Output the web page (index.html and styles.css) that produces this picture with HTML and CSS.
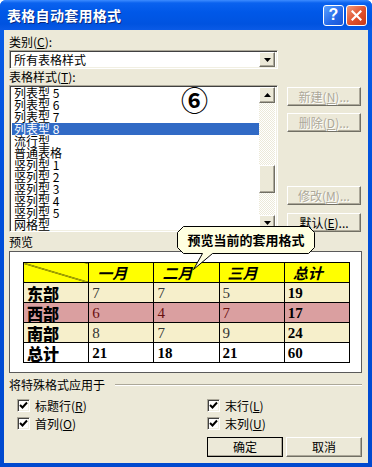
FILE: index.html
```html
<!DOCTYPE html>
<html lang="zh-CN">
<head>
    <meta charset="UTF-8">
    <title>表格自动套用格式</title>
    <link rel="stylesheet" href="styles.css">
</head>
<body>
    <div class="dialog">
        <div class="titlebar">
            <span class="title">表格自动套用格式</span>
            <div class="caption-buttons">
                <span class="cap-btn help">?</span>
                <span class="cap-btn close">
                    <svg width="11" height="11" viewBox="0 0 11 11"><path d="M1.5 1.5 L9.5 9.5 M9.5 1.5 L1.5 9.5" stroke="#fff" stroke-width="2.2" stroke-linecap="square"/></svg>
                </span>
            </div>
        </div>

        <div class="content">
            <div class="label">类别(<u>C</u>):</div>
            <div class="combo sunken">
                <span class="combo-text">所有表格样式</span>
                <span class="drop-btn raised">
                    <svg width="7" height="4" viewBox="0 0 7 4"><polygon points="0,0 7,0 3.5,4" fill="#000"/></svg>
                </span>
            </div>

            <div class="label">表格样式(<u>T</u>):</div>
            <div class="style-row">
                <div class="listbox sunken">
                    <ul class="items">
                        <li>列表型 5</li>
                        <li>列表型 6</li>
                        <li>列表型 7</li>
                        <li class="selected">列表型 8</li>
                        <li>流行型</li>
                        <li>普通表格</li>
                        <li>竖列型 1</li>
                        <li>竖列型 2</li>
                        <li>竖列型 3</li>
                        <li>竖列型 4</li>
                        <li>竖列型 5</li>
                        <li>网格型</li>
                    </ul>
                    <div class="scrollbar">
                        <span class="sb-btn raised">
                            <svg width="7" height="4" viewBox="0 0 7 4"><polygon points="3.5,0 7,4 0,4" fill="#000"/></svg>
                        </span>
                        <div class="sb-track">
                            <span class="sb-thumb raised"></span>
                        </div>
                        <span class="sb-btn raised">
                            <svg width="7" height="4" viewBox="0 0 7 4"><polygon points="0,0 7,0 3.5,4" fill="#000"/></svg>
                        </span>
                    </div>
                </div>
                <span class="marker">⑥</span>
                <div class="side-buttons">
                    <span class="btn raised disabled"><span>新建(<u>N</u>)...</span></span>
                    <span class="btn raised disabled"><span>删除(<u>D</u>)...</span></span>
                    <span class="btn raised disabled push-down"><span>修改(<u>M</u>)...</span></span>
                    <span class="btn raised"><span>默认(<u>E</u>)...</span></span>
                </div>
            </div>

            <div class="label label-preview">预览</div>
            <div class="preview">
                <table class="sample">
                    <tr class="head">
                        <td class="corner"></td>
                        <td>一月</td>
                        <td>二月</td>
                        <td>三月</td>
                        <td>总计</td>
                    </tr>
                    <tr class="light">
                        <th>东部</th>
                        <td>7</td>
                        <td>7</td>
                        <td>5</td>
                        <td class="sum">19</td>
                    </tr>
                    <tr class="red">
                        <th>西部</th>
                        <td>6</td>
                        <td>4</td>
                        <td>7</td>
                        <td class="sum">17</td>
                    </tr>
                    <tr class="light">
                        <th>南部</th>
                        <td>8</td>
                        <td>7</td>
                        <td>9</td>
                        <td class="sum">24</td>
                    </tr>
                    <tr class="total">
                        <th>总计</th>
                        <td>21</td>
                        <td>18</td>
                        <td>21</td>
                        <td>60</td>
                    </tr>
                </table>
            </div>

            <div class="group-head">
                <span>将特殊格式应用于</span>
                <span class="rule"></span>
            </div>
            <div class="checks">
                <label class="check"><span class="box"><svg width="9" height="9" viewBox="0 0 9 9"><path d="M1 4 L3.5 6.5 L8 1.5" fill="none" stroke="#000" stroke-width="2"/></svg></span><span>标题行(<u>R</u>)</span></label>
                <label class="check"><span class="box"><svg width="9" height="9" viewBox="0 0 9 9"><path d="M1 4 L3.5 6.5 L8 1.5" fill="none" stroke="#000" stroke-width="2"/></svg></span><span>末行(<u>L</u>)</span></label>
                <label class="check"><span class="box"><svg width="9" height="9" viewBox="0 0 9 9"><path d="M1 4 L3.5 6.5 L8 1.5" fill="none" stroke="#000" stroke-width="2"/></svg></span><span>首列(<u>O</u>)</span></label>
                <label class="check"><span class="box"><svg width="9" height="9" viewBox="0 0 9 9"><path d="M1 4 L3.5 6.5 L8 1.5" fill="none" stroke="#000" stroke-width="2"/></svg></span><span>末列(<u>U</u>)</span></label>
            </div>

            <div class="actions">
                <span class="btn raised default">确定</span>
                <span class="btn raised">取消</span>
            </div>
        </div>

        <div class="callout">
            <svg width="140" height="48" viewBox="0 0 140 48">
                <polygon points="7.5,2.5 132.5,2.5 138.5,8.5 138.5,23.5 132.5,29.5 36.5,29.5 17.5,45.5 26.5,29.5 7.5,29.5 1.5,23.5 1.5,8.5" fill="#ffffe1" stroke="#000" stroke-width="1"/>
            </svg>
            <span class="callout-text">预览当前的套用格式</span>
        </div>
    </div>
</body>
</html>
```

FILE: styles.css
```css
body {
    margin: 0;
    background: #ffffff;
    font-family: "Noto Sans CJK SC", "DejaVu Sans", sans-serif;
    font-size: 12px;
    color: #000000;
}
u {
    text-decoration: underline;
    text-underline-offset: 1px;
}
.dialog {
    position: relative;
    width: 372px;
    height: 467px;
    box-sizing: border-box;
    background: linear-gradient(#0a5fe8, #0050dc 40%, #0049cf);
    border-radius: 6px 6px 0 0;
    display: flex;
    flex-direction: column;
    overflow: hidden;
}
.titlebar {
    height: 30px;
    flex: none;
    display: flex;
    align-items: center;
    justify-content: space-between;
    padding: 0 5px 0 7px;
    background: linear-gradient(#3d8cff 0, #0a62ef 3px, #0058e8 12px, #0053e0 24px, #0a5ae6 30px);
}
.title {
    color: #ffffff;
    font-weight: bold;
    font-size: 14px;
    letter-spacing: 0.3px;
    text-shadow: 1px 1px 0 #0a2a80;
}
.caption-buttons {
    display: flex;
    gap: 2px;
}
.cap-btn {
    width: 21px;
    height: 21px;
    box-sizing: border-box;
    border: 1px solid #ffffff;
    border-radius: 3px;
    display: flex;
    align-items: center;
    justify-content: center;
    color: #ffffff;
    font-family: "Liberation Sans", sans-serif;
    font-weight: bold;
    font-size: 16px;
}
.help {
    background: linear-gradient(135deg, #5aa0ff, #2468e8 60%, #1a56d6);
}
.close {
    background: linear-gradient(135deg, #f09a7a, #e0502c 55%, #c83a18);
}
.content {
    flex: 1;
    margin: 0 4px 4px 4px;
    padding: 4px 6px 0 5px;
    background: #ece9d8;
    display: flex;
    flex-direction: column;
}
.label {
    height: 16px;
    line-height: 16px;
}
.raised {
    box-sizing: border-box;
    background: #ece9d8;
    border: 1px solid;
    border-color: #ffffff #716f64 #716f64 #ffffff;
    box-shadow: inset -1px -1px 0 #aca899;
}
.sunken {
    box-sizing: border-box;
    background: #ffffff;
    border: 1px solid;
    border-color: #aca899 #ffffff #ffffff #aca899;
    box-shadow: inset 1px 1px 0 #404040, inset -1px -1px 0 #f1efe2;
}
.combo {
    width: 269px;
    height: 19px;
    padding: 2px 2px 2px 4px;
    display: flex;
    align-items: center;
    justify-content: space-between;
}
.combo-text {
    line-height: 14px;
}
.drop-btn {
    width: 16px;
    height: 15px;
    display: flex;
    align-items: center;
    justify-content: center;
}
.style-row {
    position: relative;
    display: flex;
    gap: 9px;
}
.listbox {
    width: 269px;
    height: 147px;
    padding: 1px 2px 0 2px;
    display: flex;
    overflow: hidden;
}
.items {
    flex: 1;
    list-style: none;
    margin: 0;
    padding: 0;
}
.items li {
    height: 12px;
    line-height: 12px;
    padding-left: 2px;
    white-space: pre;
}
.items li.selected {
    background: #316ac5;
    color: #ffffff;
}
.scrollbar {
    width: 16px;
    display: flex;
    flex-direction: column;
}
.sb-btn {
    height: 16px;
    flex: none;
    display: flex;
    align-items: center;
    justify-content: center;
}
.sb-track {
    flex: 1;
    background: repeating-conic-gradient(#ffffff 0 25%, #ece9d8 0 50%) 0 0 / 2px 2px;
}
.sb-thumb {
    display: block;
    height: 28px;
    margin-top: 62px;
}
.marker {
    position: absolute;
    left: 172px;
    top: 0;
    font-size: 27px;
    font-weight: bold;
    line-height: 30px;
}
.side-buttons {
    display: flex;
    flex-direction: column;
    gap: 7px;
    padding-top: 2px;
}
.btn {
    width: 74px;
    height: 19px;
    display: flex;
    align-items: center;
    justify-content: center;
    line-height: 14px;
}
.btn.disabled {
    color: #aca899;
    text-shadow: 1px 1px 0 #ffffff;
}
.push-down {
    margin-top: auto;
    margin-bottom: 1px;
}
.label-preview {
    margin-top: 2px;
}
.preview {
    margin-top: 1px;
    width: 353px;
    height: 122px;
    box-sizing: border-box;
    background: #ffffff;
    border: 1px solid #5a5a5a;
    padding: 10px 0 0 13px;
}
.sample {
    border-collapse: collapse;
    table-layout: fixed;
    width: 327px;
}
.sample td, .sample th {
    box-sizing: border-box;
    width: 65px;
    height: 20px;
    padding: 0 0 0 3px;
    border: 1px solid #000000;
    text-align: left;
    font-family: "Liberation Serif", serif;
    font-size: 15px;
    font-weight: normal;
    color: #333333;
    line-height: 18px;
}
.sample th {
    font-family: "Noto Sans CJK SC", sans-serif;
    font-weight: 900;
    font-size: 16px;
    color: #000000;
}
.sample .head td {
    background: #ffff00;
    font-family: "Noto Sans CJK SC", sans-serif;
    font-weight: bold;
    font-style: italic;
    font-size: 15px;
    color: #000000;
    padding-left: 8px;
}
.sample .head td.corner {
    background: linear-gradient(to top right, transparent calc(50% - 0.7px), #000000 50%, transparent calc(50% + 0.7px)), #ffff00;
}
.sample .light td, .sample .light th {
    background: repeating-conic-gradient(#fffbe4 0 25%, #ede3b2 0 50%) 0 0 / 2px 2px;
}
.sample .red td, .sample .red th {
    background: repeating-conic-gradient(#f4d6d6 0 25%, #c0686a 0 50%) 0 0 / 2px 2px;
}
.sample .red td {
    color: #6a1010;
}
.sample td.sum, .sample .total td {
    font-weight: bold;
    color: #000000;
}
.group-head {
    margin-top: 4px;
    height: 16px;
    line-height: 16px;
    display: flex;
    align-items: center;
    gap: 10px;
}
.rule {
    flex: 1;
    height: 0;
    border-top: 1px solid #aca899;
    border-bottom: 1px solid #ffffff;
}
.checks {
    margin-top: 3px;
    padding-left: 8px;
    display: grid;
    grid-template-columns: 190px 1fr;
    grid-auto-rows: 18px;
}
.check {
    display: flex;
    align-items: center;
    gap: 5px;
}
.box {
    width: 13px;
    height: 13px;
    box-sizing: border-box;
    background: #ffffff;
    border: 1px solid;
    border-color: #aca899 #ffffff #ffffff #aca899;
    box-shadow: inset 1px 1px 0 #404040, inset -1px -1px 0 #f1efe2;
    display: flex;
    align-items: center;
    justify-content: center;
}
.actions {
    margin-top: 5px;
    display: flex;
    justify-content: flex-end;
    gap: 3px;
}
.actions .btn {
    width: 76px;
    height: 20px;
}
.btn.default {
    outline: 1px solid #000000;
    outline-offset: -1px;
    border-color: #ffffff #404040 #404040 #ffffff;
}
.callout {
    position: absolute;
    left: 176px;
    top: 224px;
    width: 140px;
    height: 48px;
}
.callout svg {
    display: block;
}
.callout-text {
    position: absolute;
    left: 0;
    top: 7px;
    width: 140px;
    text-align: center;
    font-size: 13px;
    font-weight: bold;
    line-height: 18px;
}
```
